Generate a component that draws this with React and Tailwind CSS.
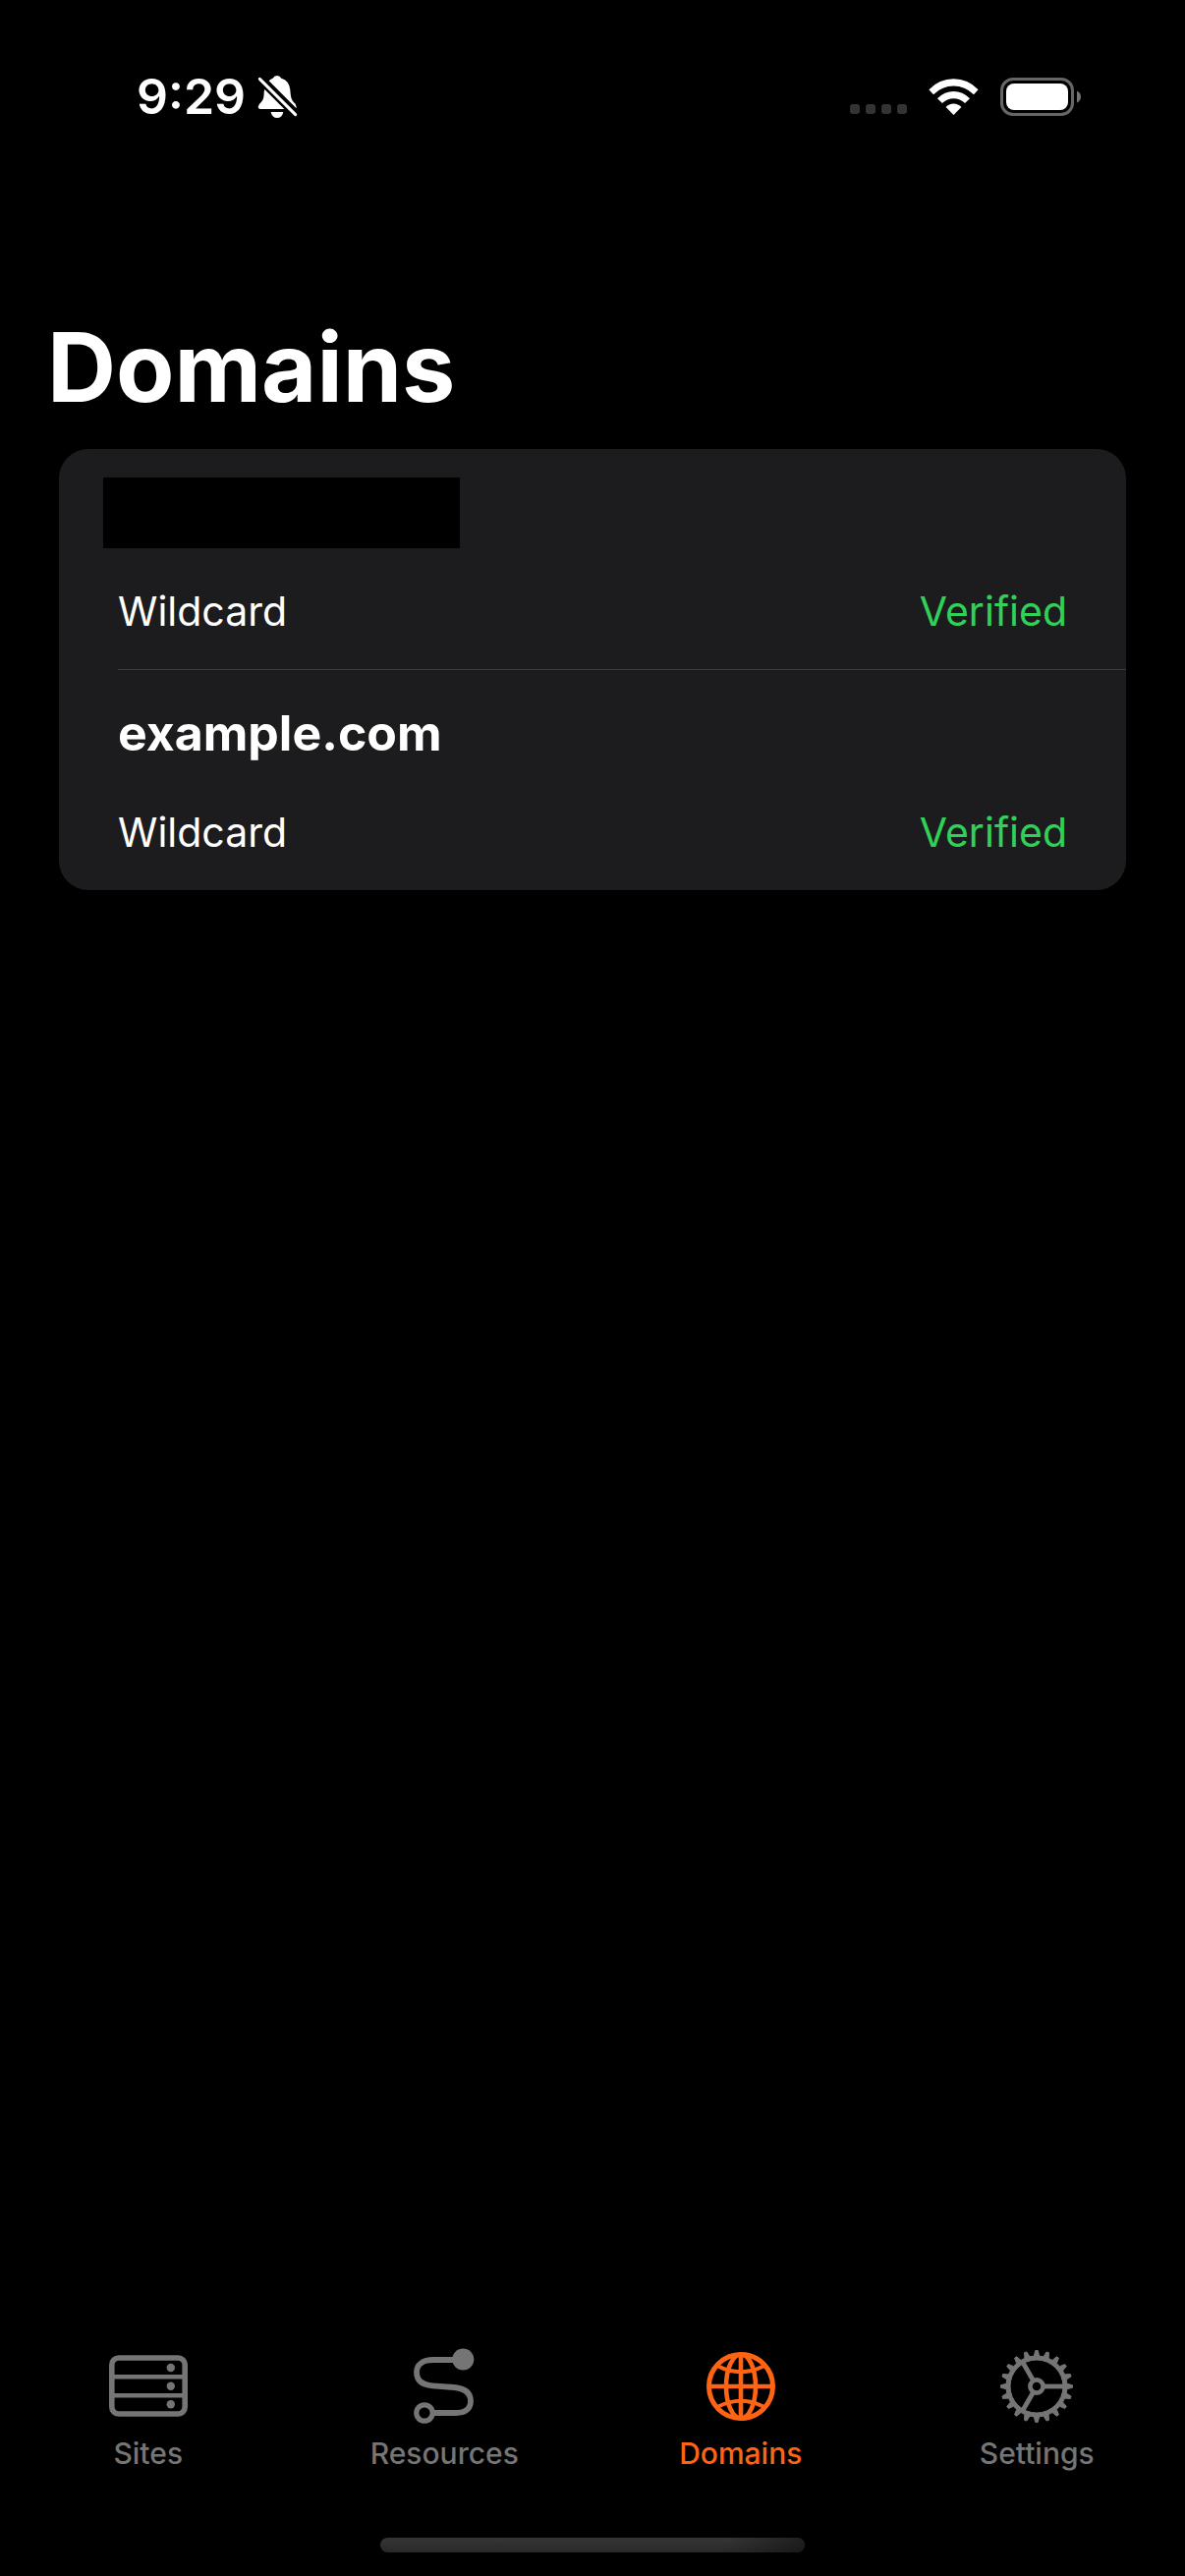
const domains = [
  { id: 1, name: null, type: "Wildcard", status: "Verified" },
  { id: 2, name: "example.com", type: "Wildcard", status: "Verified" },
];

function BellOffIcon() {
  return (
    <svg className="h-[45px] w-[41px]" viewBox="426 48 123 135" fill="currentColor" aria-label="Silent mode">
      <path d="M461 67 Q466 61 473 59 Q477 51 486 51 Q495 51 499 59 Q523 66 526 94 Q527 121 534 129 Q545 138 545 147 Q545 149 544 150 Z" />
      <path d="M448 93 L508 153 L434 153 Q428 152 428 146 Q429 139 438 131 Q446 123 446 104 Q446 98 448 93 Z" />
      <path d="M467 162 H505 Q501 180 486 180 Q471 180 467 162 Z" />
      <path d="M433 61 L542 170" stroke="currentColor" strokeWidth="9" strokeLinecap="round" />
    </svg>
  );
}

function WifiIcon() {
  return (
    <svg className="h-[37px] w-[51px]" viewBox="286 56 152 112" fill="currentColor" aria-label="Wi-Fi">
      <path d="M286 90 Q318 57 362 57 Q406 57 438 90 L424 105 Q397 79 362 79 Q327 79 300 105 Z" />
      <path d="M312 117 Q334 95 362 95 Q390 95 412 117 L397 132 Q382 117 362 117 Q342 117 327 132 Z" />
      <path d="M338 144 Q348 133 362 133 Q376 133 386 144 L362 168 Z" />
    </svg>
  );
}

function BatteryIcon() {
  return (
    <svg className="h-[39px] w-[82px]" viewBox="0 0 82 39" fill="none" aria-label="Battery full">
      <rect x="1.5" y="1.5" width="72" height="36" rx="11.5" stroke="#666" strokeWidth="3" />
      <rect x="6" y="6" width="63" height="27" rx="8" fill="#fff" />
      <path d="M78 13.5 Q82 15.5 82 19.5 Q82 23.5 78 25.5 Z" fill="#757575" />
    </svg>
  );
}

function SitesIcon() {
  return (
    <svg className="size-20" viewBox="0 0 80 80" fill="none" stroke="currentColor" aria-hidden="true">
      <rect x="2.8" y="11" width="74.4" height="57" rx="7" strokeWidth="5.6" />
      <path d="M3 30.2 H77 M3 49.2 H77" strokeWidth="4.6" />
      <g fill="currentColor" stroke="none">
        <circle cx="62.8" cy="21" r="4.2" />
        <circle cx="62.8" cy="39.7" r="4.2" />
        <circle cx="62.8" cy="58.2" r="4.2" />
      </g>
    </svg>
  );
}

function ResourcesIcon() {
  return (
    <svg className="size-20" viewBox="0 0 80 80" fill="none" stroke="currentColor" strokeWidth="5.8" aria-hidden="true">
      <path d="M58 13 H29 C18 13 12 18 12 25.5 C12 34 18 38.5 28 39.3 L50 41 C61 42 67 46 67 55 C67 62.5 62 67 52 67 H29" />
      <circle cx="20" cy="67" r="8.2" strokeWidth="5.2" />
      <circle cx="59.3" cy="12.5" r="11" fill="currentColor" stroke="none" />
    </svg>
  );
}

function GlobeIcon() {
  return (
    <svg className="size-20" viewBox="-40 -40 80 80" fill="none" stroke="currentColor" strokeWidth="4.6" aria-hidden="true">
      <circle r="32.5" strokeWidth="5" />
      <ellipse rx="15" ry="32.5" />
      <path d="M0 -33 V33 M-33 0 H33" />
      <path d="M-24 -21 Q0 -8.500 24 -21 M-24 21 Q0 8.500 24 21" strokeWidth="4.2" />
    </svg>
  );
}

const TEETH = 20;

function gearOutline() {
  const point = (radius, degrees) => {
    const a = (degrees * Math.PI) / 180;
    return `${(radius * Math.cos(a)).toFixed(2)} ${(radius * Math.sin(a)).toFixed(2)}`;
  };
  const points = [];
  for (let i = 0; i < TEETH; i++) {
    const c = (i * 360) / TEETH;
    points.push(point(31, c - 5), point(36.5, c - 2), point(36.5, c + 2), point(31, c + 5));
  }
  return `M${points.join(" L")} Z`;
}

const spokes = [0, 120, 240];

function GearIcon() {
  return (
    <svg className="size-20" viewBox="-40 -40 80 80" fill="none" stroke="currentColor" aria-hidden="true">
      <path
        d={`${gearOutline()} M27 0 A27 27 0 1 0 -27 0 A27 27 0 1 0 27 0 Z`}
        fill="currentColor"
        fillRule="evenodd"
        strokeWidth="1"
        strokeLinejoin="round"
      />
      <circle r="6.6" strokeWidth="4.6" />
      {spokes.map((angle) => (
        <path key={angle} d="M8 0 H28" strokeWidth="4.8" transform={`rotate(${angle})`} />
      ))}
    </svg>
  );
}

const tabs = [
  { label: "Sites", Icon: SitesIcon },
  { label: "Resources", Icon: ResourcesIcon },
  { label: "Domains", Icon: GlobeIcon, active: true },
  { label: "Settings", Icon: GearIcon },
];

function StatusBar() {
  return (
    <header className="flex items-center justify-between pt-[65px] pr-[106px] pl-[139px]">
      <div className="flex items-center gap-3">
        <span className="text-[50px] leading-[66px] font-semibold">9:29</span>
        <BellOffIcon />
      </div>
      <div className="flex items-center">
        <div className="mt-[26px] mr-[22px] flex gap-1.5" aria-label="No signal">
          <i className="size-2.5 rounded-[3px] bg-[#333]" />
          <i className="size-2.5 rounded-[3px] bg-[#333]" />
          <i className="size-2.5 rounded-[3px] bg-[#333]" />
          <i className="size-2.5 rounded-[3px] bg-[#333]" />
        </div>
        <WifiIcon />
        <div className="ml-[22px]">
          <BatteryIcon />
        </div>
      </div>
    </header>
  );
}

function DomainRow({ domain, divided }) {
  return (
    <li className="pl-[60px]">
      <div className={divided ? "border-b border-[#3d3d41] pt-[29px] pr-[60px] pb-8" : "pt-[29px] pr-[60px] pb-8"}>
        {domain.name ? (
          <h2 className="text-[50px] leading-[70px] font-bold">{domain.name}</h2>
        ) : (
          <div className="-ml-[15px] h-[72px] w-[363px] bg-black" />
        )}
        <div
          className={
            domain.name
              ? "mt-10 flex justify-between text-[41px] leading-[53px]"
              : "mt-[38px] flex justify-between text-[41px] leading-[53px]"
          }
        >
          <span>{domain.type}</span>
          <span className="text-[#30d158]">{domain.status}</span>
        </div>
      </div>
    </li>
  );
}

export default function App() {
  return (
    <div className="flex min-h-screen flex-col bg-black font-['Inter',sans-serif] text-white">
      <StatusBar />
      <main className="flex-1">
        <h1 className="mt-[182px] pl-[48px] text-[97px] leading-[122px] font-bold">Domains</h1>
        <ul className="mx-[60px] mt-[22px] rounded-[30px] bg-[#1c1c1e]">
          {domains.map((domain, i) => (
            <DomainRow key={domain.id} domain={domain} divided={i < domains.length - 1} />
          ))}
        </ul>
      </main>
      <nav className="grid grid-cols-4" aria-label="Main">
        {tabs.map(({ label, Icon, active }) => (
          <button
            key={label}
            type="button"
            aria-current={active ? "page" : undefined}
            className={
              active
                ? "flex flex-col items-center gap-2.5 text-[#ff6314]"
                : "flex flex-col items-center gap-2.5 text-[#757575]"
            }
          >
            <Icon />
            <span className="text-[30px] leading-9 font-medium">{label}</span>
          </button>
        ))}
      </nav>
      <div className="mx-auto mt-[68px] mb-6 h-[15px] w-[432px] overflow-hidden rounded-full bg-linear-to-b from-[#353535] to-[#292929]">
        <div className="ml-auto h-full w-20 bg-linear-to-r from-transparent to-black/40" />
      </div>
    </div>
  );
}
